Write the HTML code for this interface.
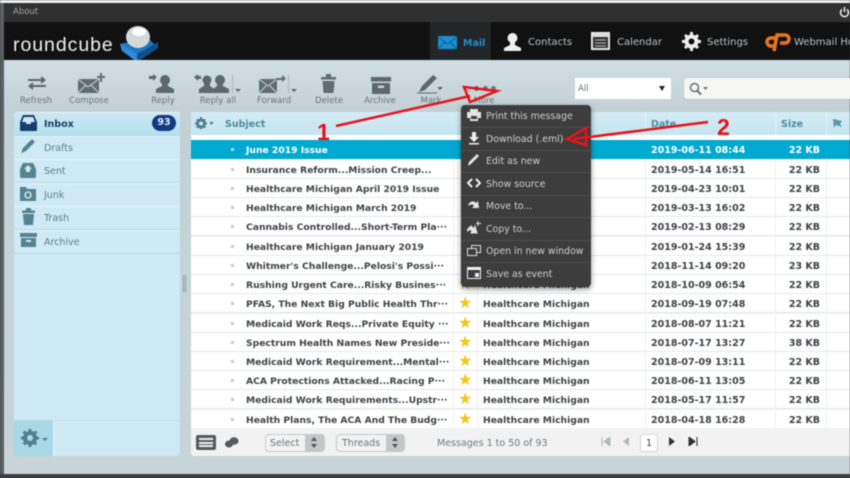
<!DOCTYPE html>
<html style="background:#3b3e40"><head><meta charset="utf-8">
<style>
html,body{margin:0;padding:0}
body{width:850px;height:478px;overflow:hidden;position:relative;background:#c6d4d9;font-family:"DejaVu Sans","Liberation Sans",sans-serif;filter:blur(.45px)}
.a{position:absolute}
.t{position:absolute;white-space:nowrap}
.tb{position:absolute;top:96px;font-size:8.5px;color:#6a7478;white-space:nowrap;transform:translateX(-50%)}
.fl{position:absolute;left:14px;width:166px;height:23px;border-bottom:1px solid #b5d8e4;box-shadow:0 1px 0 #e2f3f9 inset}
.fl span{position:absolute;left:30px;top:7px;font-size:9.5px;color:#5e7d88}
.r{position:absolute;left:191px;width:659px;height:19px;background:#fff;border-bottom:1px solid #e4e7e8;box-sizing:border-box;font-weight:bold;font-size:9.5px;color:#3c4447}
.r span{position:absolute;top:5px;white-space:nowrap}
.r .d{left:40px;top:8px;width:3px;height:3px;background:#c5cdd0}
.r .s{left:55px;font-size:9.2px}
.r .st{left:267px;top:1px;font-size:16px;color:#f5c518;font-weight:normal;line-height:16px}
.r .f{left:292px;font-size:9.2px}
.r .dt{left:460px}
.r .z{left:590px;width:39px;text-align:right}
.m{position:absolute;left:461px;width:130px;height:22px;border-bottom:1px solid #4f4f4f;font-size:9.4px;color:#cfcfcf}
.m span{position:absolute;left:25px;top:6px;white-space:nowrap}
.m svg{position:absolute;left:6px;top:3px}
.nav{position:absolute;top:37px;font-size:10px;color:#b9c0c4;white-space:nowrap}
</style></head>
<body>
<div class="a" style="left:0;top:0;width:850px;height:3px;background:#eee"></div>
<div class="a" style="left:0;top:3px;width:4px;height:475px;background:#5a5f61"></div>
<div class="a" style="left:4px;top:3px;width:846px;height:19px;background:#303030"></div>
<div class="t" style="left:13px;top:7px;font-size:8.5px;color:#a4a4a4">About</div>
<svg class="a" style="left:839px;top:6px" width="11" height="12" viewBox="0 0 11 12"><path d="M3 3.5a4 4 0 1 0 5 0M5.500 1v5" fill="none" stroke="#eee" stroke-width="1.500"/></svg>
<div class="a" style="left:4px;top:22px;width:846px;height:38px;background:#111"></div>
<div class="a" style="left:430px;top:22px;width:61px;height:38px;background:#232628"></div>
<div class="t" style="left:13px;top:34px;font-size:19.5px;color:#eee;font-family:'Liberation Sans',sans-serif;letter-spacing:.95px">roundcube</div>
<svg class="a" style="left:118px;top:24px" width="42" height="40" viewBox="0 0 42 40"><path d="M2 20L30 14 40 24 19 38Z" fill="#1f78c4"/><path d="M2 20L19 30 19 38 4 27Z" fill="#2f8ad6"/><path d="M19 30L40 18 40 24 19 38Z" fill="#0f4f8a"/><ellipse cx="20" cy="13" rx="12" ry="11" fill="#d5d8d8"/><ellipse cx="21" cy="8" rx="7" ry="4" fill="#fff"/></svg>
<svg class="a" style="left:438px;top:36px" width="19" height="13" viewBox="0 0 19 13"><rect width="19" height="13" fill="#1d8ecf"/><path d="M0 1l9.500 7L19 1M0 13l7-7M19 13l-7-7" stroke="#0e5f92" fill="none"/></svg>
<div class="nav" style="left:463px;color:#1d8ecf;font-weight:bold;font-size:9.5px;top:38px">Mail</div>
<svg class="a" style="left:503px;top:32px" width="19" height="19" viewBox="0 0 19 19"><circle cx="9.500" cy="6" r="5" fill="#eee"/><path d="M7 10h5v3l6 3v3H1v-3l6-3z" fill="#eee"/></svg>
<div class="nav" style="left:528px">Contacts</div>
<svg class="a" style="left:591px;top:32px" width="19" height="18" viewBox="0 0 19 18"><rect x=".5" y=".5" width="18" height="17" fill="#ddd" stroke="#eee"/><rect x="2" y="5" width="15" height="11" fill="#333"/><path d="M4 8h11M4 11h11M4 14h11" stroke="#bbb"/></svg>
<div class="nav" style="left:617px">Calendar</div>
<svg class="a" style="left:682px;top:32px" width="19" height="19" viewBox="0 0 19 19"><circle cx="9.500" cy="9.500" r="5" fill="none" stroke="#eee" stroke-width="4"/><path d="M9.500 0v19M0 9.500h19M3 3l13 13M16 3L3 16" stroke="#eee" stroke-width="3" stroke-dasharray="3 13"/></svg>
<div class="nav" style="left:707px">Settings</div>
<svg class="a" style="left:765px;top:32px" width="27" height="20" viewBox="0 0 27 20"><path d="M11 6H6a4 4 0 0 0 0 8h4M9 19L12 3h8a4 4 0 0 1 0 8h-5" fill="none" stroke="#e8761c" stroke-width="3.500"/></svg>
<div class="nav" style="left:794px">Webmail Home</div>

<div class="a" style="left:4px;top:60px;width:846px;height:414px;background:linear-gradient(#d0dfe4,#c3d1d6 12%,#c8d4d8)"></div>
<div class="a" style="left:0;top:474px;width:850px;height:4px;background:#3b3e40"></div>

<!-- toolbar icons -->
<svg class="a" style="left:27px;top:74px" width="20" height="18" viewBox="0 0 20 18"><path d="M1 5h13V2l5 4-5 4V7H1zM19 11H6V8l-5 4 5 4v-3h13z" fill="#5e686c"/></svg>
<svg class="a" style="left:78px;top:73px" width="28" height="20" viewBox="0 0 28 20"><rect y="6" width="21" height="14" fill="#626c70"/><path d="M0 6l10 8 11-8M0 20l8-8M21 20l-8-8" stroke="#c8d5da" fill="none"/><path d="M23 0v9M19 4h8" stroke="#626c70" stroke-width="2"/></svg>
<svg class="a" style="left:149px;top:73px" width="26" height="20" viewBox="0 0 26 20"><circle cx="16" cy="7" r="5" fill="#5e686c"/><path d="M13 10h6v3l6 3v4H7v-4l6-3z" fill="#5e686c"/><path d="M8 4l-4-3v2H0v3h4v2z" fill="#5e686c"/></svg>
<svg class="a" style="left:193px;top:73px" width="38" height="20" viewBox="0 0 38 20"><circle cx="14" cy="7" r="4.500" fill="#5e686c"/><path d="M11 10h6v3l4 3v4H6v-4l5-3z" fill="#5e686c"/><circle cx="27" cy="7" r="5" fill="#5e686c"/><path d="M24 10h6v3l6 3v4H20v-4l4-3z" fill="#5e686c"/><path d="M1 4l4-3v2h3v3H5v2z" fill="#5e686c"/></svg>
<div class="a" style="left:232px;top:75px;width:1px;height:18px;background:#aab6bb"></div>
<div class="a" style="left:235px;top:89px;width:0;height:0;border:3px solid transparent;border-top:3px solid #5e686c"></div>
<svg class="a" style="left:259px;top:74px" width="28" height="19" viewBox="0 0 28 19"><rect y="5" width="18" height="14" fill="#626c70"/><path d="M0 5l9 7 9-7M0 19l7-7M18 19l-7-7" stroke="#c8d5da" fill="none"/><path d="M17 4h6V1l4 3.500-4 3.500V6h-6z" fill="#626c70"/></svg>
<div class="a" style="left:288px;top:75px;width:1px;height:18px;background:#aab6bb"></div>
<div class="a" style="left:291px;top:89px;width:0;height:0;border:3px solid transparent;border-top:3px solid #5e686c"></div>
<svg class="a" style="left:321px;top:74px" width="15" height="19" viewBox="0 0 15 19"><rect x="0" y="3" width="15" height="2.500" fill="#626c70"/><rect x="5" y="0" width="5" height="3" fill="#626c70"/><path d="M1.500 7h12l-1 12h-10z" fill="#626c70"/></svg>
<svg class="a" style="left:371px;top:77px" width="20" height="17" viewBox="0 0 20 17"><rect width="20" height="4.500" fill="#5e686c"/><path d="M1 6h18v11H1z" fill="#5e686c"/><rect x="7" y="8.500" width="6" height="2.500" fill="#c8d5da"/></svg>
<svg class="a" style="left:417px;top:74px" width="34" height="20" viewBox="0 0 34 20"><path d="M2 18l3-6L16 1l4 3L8 16z" fill="#5e686c"/><path d="M0 19h20" stroke="#5e686c"/><path d="M20 13h6l-3 3z" fill="#5e686c"/></svg>
<div class="a" style="left:474px;top:86px;width:5px;height:5px;border-radius:50%;background:#5e686c"></div>
<div class="a" style="left:483px;top:86px;width:5px;height:5px;border-radius:50%;background:#6d787c"></div>
<div class="a" style="left:491px;top:86px;width:5px;height:5px;border-radius:50%;background:#6d787c"></div>

<div class="tb" style="left:36px">Refresh</div>
<div class="tb" style="left:89px">Compose</div>
<div class="tb" style="left:163px">Reply</div>
<div class="tb" style="left:218px">Reply all</div>
<div class="tb" style="left:274px">Forward</div>
<div class="tb" style="left:329px">Delete</div>
<div class="tb" style="left:380px">Archive</div>
<div class="tb" style="left:431px">Mark</div>
<div class="tb" style="left:484px">More</div>

<div class="a" style="left:575px;top:78px;width:96px;height:21px;background:#fff"></div>
<div class="t" style="left:578px;top:84px;font-size:8.5px;color:#6a7478">All</div>
<div class="a" style="left:659px;top:86px;width:0;height:0;border:3.500px solid transparent;border-top:5px solid #222"></div>
<div class="a" style="left:684px;top:78px;width:170px;height:21px;background:#f6f6f4;border-radius:3px;box-shadow:0 0 1px #8a989d"></div>
<svg class="a" style="left:689px;top:82px" width="20" height="14" viewBox="0 0 20 14"><circle cx="5.500" cy="5.500" r="4" fill="none" stroke="#68757a" stroke-width="1.500"/><path d="M8 8.500l4 4" stroke="#68757a" stroke-width="2"/><path d="M14 5h5l-2.500 3z" fill="#68757a"/></svg>

<!-- folders -->
<div class="a" style="left:14px;top:112px;width:166px;height:344px;background:#cfeaf4;border-radius:3px"></div>
<div class="fl" style="top:112px;height:23px;background:linear-gradient(#cbe9f4,#b7deed);border-radius:3px 3px 0 0"><span style="color:#1e3f66;font-weight:bold">Inbox</span></div>
<svg class="a" style="left:20px;top:115px" width="17" height="16" viewBox="0 0 17 16"><path d="M3 0h11l3 7v8a1 1 0 0 1-1 1H1a1 1 0 0 1-1-1V7z" fill="#163d6d"/><path d="M4 2h9l2 5h-4v2H6V7H2z" fill="#cbe9f4"/></svg>
<div class="a" style="left:152px;top:115px;width:24px;height:16px;border-radius:8px;background:#123a84;color:#e8eef6;font-size:9.500px;font-weight:bold;text-align:center;line-height:16px">93</div>
<div class="fl" style="top:136px"><span>Drafts</span></div>
<svg class="a" style="left:20px;top:138px" width="16" height="16" viewBox="0 0 16 16"><path d="M1 15l2-5L12 1l3 3-9 9z" fill="#55838f"/></svg>
<div class="fl" style="top:159px"><span>Sent</span></div>
<svg class="a" style="left:20px;top:163px" width="16" height="15" viewBox="0 0 16 15"><path d="M3 0h10l3 6v8a1 1 0 0 1-1 1H1a1 1 0 0 1-1-1V6z" fill="#55838f"/><path d="M8 2l4 4H10v3H6V6H4z" fill="#cfeaf4"/></svg>
<div class="fl" style="top:183px"><span>Junk</span></div>
<svg class="a" style="left:20px;top:187px" width="16" height="14" viewBox="0 0 16 14"><path d="M0 0h6l1 2h9v12H0z" fill="#55838f"/><circle cx="8" cy="8" r="3" fill="none" stroke="#cfeaf4" stroke-width="1.500"/></svg>
<div class="fl" style="top:206px"><span>Trash</span></div>
<svg class="a" style="left:22px;top:208px" width="13" height="17" viewBox="0 0 13 17"><rect y="2.500" width="13" height="2.500" fill="#55838f"/><rect x="4" width="5" height="2.500" fill="#55838f"/><path d="M1 6h11l-1 11H2z" fill="#55838f"/></svg>
<div class="fl" style="top:230px"><span>Archive</span></div>
<svg class="a" style="left:20px;top:233px" width="17" height="14" viewBox="0 0 17 14"><rect width="17" height="4" fill="#55838f"/><rect x="1" y="5" width="15" height="9" fill="#55838f"/><rect x="6" y="7" width="5" height="2" fill="#cfeaf4"/></svg>
<div class="a" style="left:14px;top:420px;width:39px;height:36px;background:#a9d8e6;border-radius:0 0 0 3px"></div>
<div class="a" style="left:53px;top:420px;width:127px;height:1px;background:#bfe0ec"></div>
<div class="a" style="left:53px;top:420px;width:1px;height:36px;background:#e4f4fa"></div>
<svg class="a" style="left:21px;top:429px" width="18" height="18" viewBox="0 0 18 18"><circle cx="9" cy="9" r="5" fill="none" stroke="#4f8190" stroke-width="4"/><path d="M9 0v18M0 9h18M2.600 2.600l12.800 12.800M15.400 2.600L2.600 15.400" stroke="#4f8190" stroke-width="3" stroke-dasharray="3 12"/></svg>
<div class="a" style="left:42px;top:438px;width:0;height:0;border:3px solid transparent;border-top:3px solid #4f8190"></div>
<div class="a" style="left:183px;top:275px;width:4px;height:17px;background:repeating-linear-gradient(90deg,#8c9ca2 0 1px,#c6d4d9 1px 2px)"></div>

<!-- list -->
<div class="a" style="left:191px;top:112px;width:659px;height:344px;background:#f2f2f2;border-radius:3px 0 0 3px"></div>
<div class="a" style="left:191px;top:135px;width:659px;height:5px;background:#fff"></div>
<div class="a" style="left:191px;top:112px;width:659px;height:23px;background:linear-gradient(#d3ecf5,#c6e5f0)"></div>
<svg class="a" style="left:195px;top:117px" width="20" height="13" viewBox="0 0 20 13"><circle cx="6" cy="6.500" r="3.500" fill="none" stroke="#4f8190" stroke-width="3"/><path d="M6 0v13M0 6.500h12M1.800 2.300l8.400 8.400M10.200 2.300L1.800 10.700" stroke="#4f8190" stroke-width="2" stroke-dasharray="2 8"/><path d="M14 5h5l-2.500 3z" fill="#4f8190"/></svg>
<div class="t" style="left:225px;top:119px;font-size:9.500px;font-weight:bold;color:#4e8ba0">Subject</div>
<div class="t" style="left:651px;top:119px;font-size:9.500px;font-weight:bold;color:#4e8ba0">Date</div>
<div class="t" style="left:781px;top:119px;font-size:9.500px;font-weight:bold;color:#4e8ba0">Size</div>
<svg class="a" style="left:832px;top:118px" width="11" height="11" viewBox="0 0 11 11"><path d="M1 1l9 2-2 3 2 3-6-2-2 3z" fill="#5a97aa"/></svg>
<div class="a" style="left:645px;top:112px;width:1px;height:23px;background:#e0f1f7"></div>
<div class="a" style="left:775px;top:112px;width:1px;height:23px;background:#e0f1f7"></div>
<div class="a" style="left:826px;top:112px;width:1px;height:23px;background:#e0f1f7"></div>

<div class="r" style="top:140px;background:#00a9d0;color:#fff;border:0"><span class="d" style="background:#9fdcec"></span><span class="s">June 2019 Issue</span><span class="dt">2019-06-11 08:44</span><span class="z">22 KB</span></div>
<div class="r" style="top:160px"><span class="d"></span><span class="s">Insurance Reform...Mission Creep...</span><span class="dt">2019-05-14 16:51</span><span class="z">22 KB</span></div>
<div class="r" style="top:179px"><span class="d"></span><span class="s">Healthcare Michigan April 2019 Issue</span><span class="dt">2019-04-23 10:01</span><span class="z">22 KB</span></div>
<div class="r" style="top:198px"><span class="d"></span><span class="s">Healthcare Michigan March 2019</span><span class="dt">2019-03-13 16:02</span><span class="z">22 KB</span></div>
<div class="r" style="top:217px"><span class="d"></span><span class="s">Cannabis Controlled...Short-Term Pla···</span><span class="dt">2019-02-13 08:29</span><span class="z">22 KB</span></div>
<div class="r" style="top:237px"><span class="d"></span><span class="s">Healthcare Michigan January 2019</span><span class="dt">2019-01-24 15:39</span><span class="z">22 KB</span></div>
<div class="r" style="top:256px"><span class="d"></span><span class="s">Whitmer's Challenge...Pelosi's Possi···</span><span class="dt">2018-11-14 09:20</span><span class="z">23 KB</span></div>
<div class="r" style="top:275px"><span class="d"></span><span class="s">Rushing Urgent Care...Risky Busines···</span><span class="st">★</span><span class="f">Healthcare Michigan</span><span class="dt">2018-10-09 06:54</span><span class="z">22 KB</span></div>
<div class="r" style="top:294px"><span class="d"></span><span class="s">PFAS, The Next Big Public Health Thr···</span><span class="st">★</span><span class="f">Healthcare Michigan</span><span class="dt">2018-09-19 07:48</span><span class="z">22 KB</span></div>
<div class="r" style="top:314px"><span class="d"></span><span class="s">Medicaid Work Reqs...Private Equity ···</span><span class="st">★</span><span class="f">Healthcare Michigan</span><span class="dt">2018-08-07 11:21</span><span class="z">22 KB</span></div>
<div class="r" style="top:333px"><span class="d"></span><span class="s">Spectrum Health Names New Preside···</span><span class="st">★</span><span class="f">Healthcare Michigan</span><span class="dt">2018-07-17 13:27</span><span class="z">38 KB</span></div>
<div class="r" style="top:352px"><span class="d"></span><span class="s">Medicaid Work Requirement...Mental···</span><span class="st">★</span><span class="f">Healthcare Michigan</span><span class="dt">2018-07-09 13:11</span><span class="z">22 KB</span></div>
<div class="r" style="top:371px"><span class="d"></span><span class="s">ACA Protections Attacked...Racing P···</span><span class="st">★</span><span class="f">Healthcare Michigan</span><span class="dt">2018-06-11 13:05</span><span class="z">22 KB</span></div>
<div class="r" style="top:390px"><span class="d"></span><span class="s">Medicaid Work Requirements...Upstr···</span><span class="st">★</span><span class="f">Healthcare Michigan</span><span class="dt">2018-05-17 11:57</span><span class="z">22 KB</span></div>
<div class="r" style="top:410px;height:18px;border:0"><span class="d"></span><span class="s">Health Plans, The ACA And The Budg···</span><span class="st">★</span><span class="f">Healthcare Michigan</span><span class="dt">2018-04-18 16:28</span><span class="z">22 KB</span></div>
<div class="a" style="left:645px;top:160px;width:1px;height:268px;background:#eef0f1"></div>
<div class="a" style="left:775px;top:160px;width:1px;height:268px;background:#eef0f1"></div>
<div class="a" style="left:826px;top:160px;width:1px;height:268px;background:#eef0f1"></div>
<div class="a" style="left:453px;top:160px;width:1px;height:268px;background:#eef0f1"></div>
<div class="a" style="left:477px;top:160px;width:1px;height:268px;background:#eef0f1"></div>

<!-- footer -->
<div class="a" style="left:196px;top:435px;width:20px;height:15px;background:#555b5e;border-radius:2px"></div>
<div class="a" style="left:199px;top:438px;width:14px;height:2px;background:#eee"></div>
<div class="a" style="left:199px;top:441.500px;width:14px;height:2px;background:#eee"></div>
<div class="a" style="left:199px;top:445px;width:14px;height:2px;background:#eee"></div>
<svg class="a" style="left:225px;top:437px" width="14" height="11" viewBox="0 0 14 11"><ellipse cx="4" cy="7" rx="4" ry="3.500" fill="#555b5e"/><ellipse cx="9" cy="4" rx="4.500" ry="3.800" fill="#555b5e"/></svg>
<div class="a" style="left:265px;top:434px;width:59px;height:18px;background:#f2f2f2;border:1px solid #c9c9c9;box-sizing:border-box;border-radius:4px"></div>
<div class="a" style="left:305px;top:434px;width:20px;height:18px;background:#c4c7c7;border-radius:0 4px 4px 0"></div>
<div class="t" style="left:270px;top:438px;font-size:9.500px;color:#6a7478">Select</div>
<div class="a" style="left:311px;top:437px;font-size:0;width:0;height:0;border:3px solid transparent;border-bottom:4px solid #555;border-top:0"></div>
<div class="a" style="left:311px;top:444px;width:0;height:0;border:3px solid transparent;border-top:4px solid #555;border-bottom:0"></div>
<div class="a" style="left:336px;top:434px;width:68px;height:18px;background:#f2f2f2;border:1px solid #c9c9c9;box-sizing:border-box;border-radius:4px"></div>
<div class="a" style="left:386px;top:434px;width:19px;height:18px;background:#c4c7c7;border-radius:0 4px 4px 0"></div>
<div class="t" style="left:342px;top:438px;font-size:9.500px;color:#6a7478">Threads</div>
<div class="a" style="left:392px;top:437px;width:0;height:0;border:3px solid transparent;border-bottom:4px solid #555;border-top:0"></div>
<div class="a" style="left:392px;top:444px;width:0;height:0;border:3px solid transparent;border-top:4px solid #555;border-bottom:0"></div>
<div class="t" style="left:437px;top:438px;font-size:9.500px;color:#6f7a7e">Messages 1 to 50 of 93</div>
<svg class="a" style="left:601px;top:437px" width="10" height="9" viewBox="0 0 10 9"><path d="M1 0v9M9 0v9L3 4.500z" stroke="#b3b8ba" fill="#b3b8ba"/></svg>
<svg class="a" style="left:622px;top:437px" width="8" height="9" viewBox="0 0 8 9"><path d="M7 0v9L1 4.500z" fill="#b3b8ba"/></svg>
<div class="a" style="left:640px;top:434px;width:18px;height:18px;background:#fff;border:1px solid #d5d5d5;box-sizing:border-box;border-radius:3px;font-size:9.500px;color:#444;text-align:center;line-height:18px">1</div>
<svg class="a" style="left:668px;top:437px" width="8" height="9" viewBox="0 0 8 9"><path d="M1 0v9L7 4.500z" fill="#333"/></svg>
<svg class="a" style="left:688px;top:437px" width="10" height="9" viewBox="0 0 10 9"><path d="M9 0v9M1 0v9L7 4.500z" stroke="#333" fill="#333"/></svg>

<!-- popup -->
<div class="a" style="left:461px;top:105px;width:130px;height:182px;background:#3d3d3d;border-radius:4px;box-shadow:0 2px 6px rgba(0,0,0,.45)"></div>
<div class="m" style="top:105px"><svg width="14" height="14" viewBox="0 0 14 14"><path d="M3 1h8v3h3v6h-3v3H3v-3H0V4h3z" fill="#e4e4e4"/><rect x="4" y="8" width="6" height="3" fill="#3d3d3d"/></svg><span>Print this message</span></div>
<div class="m" style="top:128px"><svg width="14" height="14" viewBox="0 0 14 14"><path d="M5 1h4v5h3l-5 5-5-5h3zM2 12h10v1.500H2z" fill="#eee"/></svg><span>Download (.eml)</span></div>
<div class="m" style="top:150px"><svg width="14" height="14" viewBox="0 0 14 14"><path d="M1 13l1-4 8-8 2 2-8 8z" fill="#e4e4e4"/></svg><span>Edit as new</span></div>
<div class="m" style="top:173px"><svg width="14" height="14" viewBox="0 0 14 14"><path d="M5 3L1 7l4 4M9 3l4 4-4 4" fill="none" stroke="#eee" stroke-width="2"/></svg><span>Show source</span></div>
<div class="m" style="top:195px"><svg width="14" height="14" viewBox="0 0 14 14"><path d="M1 8c1-5 6-6 8-3l2-2 1 7H5l2-2C6 6 4 6 1 8z" fill="#e4e4e4"/></svg><span>Move to...</span></div>
<div class="m" style="top:218px"><svg width="14" height="14" viewBox="0 0 14 14"><path d="M0 9l4-4 3 3 1-3 2 7H4l1-2-2-2-2 2zM11 0v5M9 2.500h5" fill="#e4e4e4" stroke="#e4e4e4"/></svg><span>Copy to...</span></div>
<div class="m" style="top:240px"><svg width="14" height="14" viewBox="0 0 14 14"><rect x="4.500" y="2.500" width="9" height="7" fill="none" stroke="#ddd"/><rect x=".5" y="5.500" width="9" height="7" fill="#3d3d3d" stroke="#ddd"/></svg><span>Open in new window</span></div>
<div class="m" style="top:263px;border:0"><svg width="14" height="14" viewBox="0 0 14 14"><rect x=".5" y="1.500" width="13" height="11" fill="none" stroke="#eee"/><rect y="1" width="14" height="3" fill="#eee"/><rect x="8" y="7" width="4" height="4" fill="#eee"/></svg><span>Save as event</span></div>

<!-- annotations -->
<svg class="a" style="left:0;top:0" width="850" height="478" viewBox="0 0 850 478">
<path d="M336 126L470 96" stroke="#e8121a" stroke-width="2.500" fill="none"/>
<path d="M464 87L497 91 470 102Z" fill="none" stroke="#e8121a" stroke-width="2.500"/>
<path d="M708 122L574 139" stroke="#e8121a" stroke-width="2.500" fill="none"/>
<path d="M567 139L586 128 586 145Z" fill="none" stroke="#e8121a" stroke-width="2.500"/>
<text x="317" y="140" font-family="Liberation Sans" font-weight="bold" font-size="23" fill="#e8121a">1</text>
<text x="717" y="135" font-family="Liberation Sans" font-weight="bold" font-size="23" fill="#e8121a">2</text>
</svg>
</body></html>
